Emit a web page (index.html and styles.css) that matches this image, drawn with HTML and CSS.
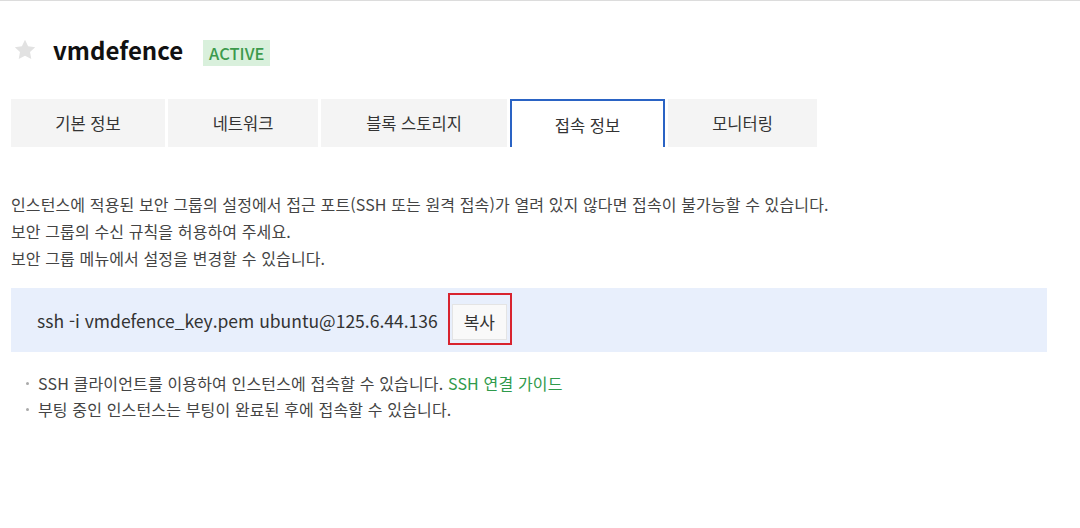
FILE: index.html
```html
<!DOCTYPE html>
<html lang="ko">
<head>
<meta charset="utf-8">
<link rel="stylesheet" href="styles.css">
</head>
<body>
<div class="page">
  <header class="title-row">
    <svg class="star" width="22" height="21" viewBox="0 0 24 23"><path d="M12 0.8l3.4 7.1 7.8 1-5.7 5.4 1.4 7.7L12 18.3 5.1 22l1.4-7.7L0.8 8.9l7.8-1z" fill="#e2e2e2"/></svg>
    <h1 class="title">vmdefence</h1>
    <span class="badge">ACTIVE</span>
  </header>
  <nav class="tabs">
    <div class="tab">기본 정보</div>
    <div class="tab">네트워크</div>
    <div class="tab">블록 스토리지</div>
    <div class="tab active">접속 정보</div>
    <div class="tab">모니터링</div>
  </nav>
  <div class="notice">
    <p>인스턴스에 적용된 보안 그룹의 설정에서 접근 포트(SSH 또는 원격 접속)가 열려 있지 않다면 접속이 불가능할 수 있습니다.</p>
    <p>보안 그룹의 수신 규칙을 허용하여 주세요.</p>
    <p>보안 그룹 메뉴에서 설정을 변경할 수 있습니다.</p>
  </div>
  <div class="cmd-box">
    <span class="cmd">ssh -i vmdefence_key.pem ubuntu@125.6.44.136</span>
    <span class="highlight"><button class="copy">복사</button></span>
  </div>
  <ul class="tips">
    <li>SSH 클라이언트를 이용하여 인스턴스에 접속할 수 있습니다. <a class="link">SSH 연결 가이드</a></li>
    <li>부팅 중인 인스턴스는 부팅이 완료된 후에 접속할 수 있습니다.</li>
  </ul>
</div>
</body>
</html>
```
FILE: styles.css
```css
html, body {
  margin: 0;
  padding: 0;
  background: #fff;
}
body {
  font-family: "Noto Sans CJK KR", "Noto Sans", sans-serif;
  color: #333;
  border-top: 1px solid #dcdcdc;
}
.page {
  padding: 0 11px;
}
.title-row {
  display: flex;
  align-items: center;
  height: 99px;
  margin-top: -1px;
  box-sizing: border-box;
}
.star {
  margin-left: 3px;
  margin-right: 17px;
}
.title {
  margin: 0;
  font-size: 24px;
  font-weight: 700;
  color: #111;
  line-height: 1;
}
.badge {
  margin-left: 20px;
  margin-top: 6px;
  background: #d9f0dc;
  color: #3c9a4c;
  font-size: 16.5px;
  line-height: 26px;
  padding: 0 6px;
  font-weight: 500;
}
.tabs {
  display: flex;
  gap: 3px;
  height: 48px;
}
.tab {
  background: #f4f4f4;
  color: #333;
  font-size: 16.5px;
  display: flex;
  align-items: center;
  justify-content: center;
  box-sizing: border-box;
}
.tab:nth-child(1) { width: 154px; }
.tab:nth-child(2) { width: 150px; }
.tab:nth-child(3) { width: 186px; }
.tab:nth-child(4) { width: 155px; }
.tab:nth-child(5) { width: 149px; }
.tab.active {
  background: #fff;
  border: 2px solid #2a63c4;
  border-bottom: none;
  padding-top: 2px;
}
.notice {
  margin-top: 44px;
  font-size: 16px;
  color: #444;
  letter-spacing: 0.12px;
}
.notice p {
  margin: 0;
  line-height: 27px;
}
.cmd-box {
  margin-top: 16px;
  width: 1036px;
  height: 64px;
  background: #e8effc;
  display: flex;
  align-items: center;
  padding-left: 26px;
  box-sizing: border-box;
}
.cmd {
  font-size: 17.5px;
  color: #333;
}
.highlight {
  margin-left: 10px;
  margin-top: -2px;
  border: 2px solid #d8232f;
  padding: 9px 3px 3px 2px;
  display: flex;
}
.copy {
  font-family: inherit;
  font-size: 17px;
  color: #333;
  background: #f9f9f9;
  border: 1px solid #e4e4e4;
  padding: 0 11px;
  height: 36px;
  line-height: 34px;
}
.tips {
  list-style: none;
  margin: 18px 0 0;
  padding: 0 0 0 15px;
  font-size: 16px;
  color: #444;
  letter-spacing: 0.15px;
}
.tips li {
  line-height: 26px;
  position: relative;
  padding-left: 12px;
}
.tips li::before {
  content: "";
  position: absolute;
  left: 0;
  top: 12px;
  width: 3px;
  height: 3px;
  border-radius: 50%;
  background: #aaa;
}
.link {
  color: #2f9a4b;
  text-decoration: none;
}
```
